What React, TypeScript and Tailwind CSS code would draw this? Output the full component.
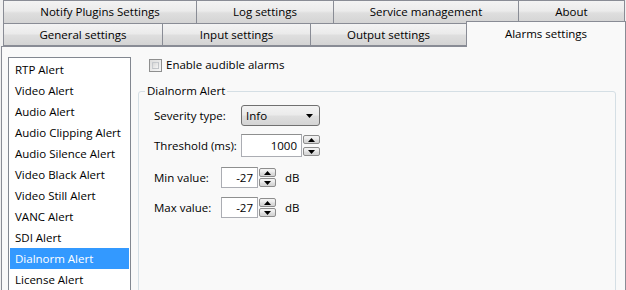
import React from "react";

const tabBg =
  "bg-[linear-gradient(to_bottom,#f3f3f3,#ebebeb_45%,#dedede_55%,#d4d4d4)]";

function Tab({ label, w, first }: { label: string; w: string; first?: boolean }) {
  return (
    <div
      className={`${w} ${first ? "" : "-ml-px"} h-full border border-[#898c95] ${tabBg} flex items-center justify-center text-black`}
    >
      {label}
    </div>
  );
}

function Arrow({ up }: { up?: boolean }) {
  return (
    <svg width="7" height="4" viewBox="0 0 7 4">
      <path d={up ? "M0 4 L3.5 0 L7 4 Z" : "M0 0 L7 0 L3.5 4 Z"} fill="#000" />
    </svg>
  );
}

function Spin({ value, w }: { value: string; w: string }) {
  return (
    <div className="flex items-stretch h-full">
      <div
        className={`${w} h-full bg-white border border-[#abadb3] border-t-[#8e8f8f] flex items-center justify-end pr-[4px] text-black`}
      >
        {value}
      </div>
      <div className="w-[18px] flex flex-col justify-between py-[1px] pl-[1px]">
        <div className={`h-[9px] rounded-[2px] border border-[#8d8d8d] ${tabBg} flex items-center justify-center`}>
          <Arrow up />
        </div>
        <div className={`h-[9px] rounded-[2px] border border-[#8d8d8d] ${tabBg} flex items-center justify-center`}>
          <Arrow />
        </div>
      </div>
    </div>
  );
}

const alerts = [
  "RTP Alert",
  "Video Alert",
  "Audio Alert",
  "Audio Clipping Alert",
  "Audio Silence Alert",
  "Video Black Alert",
  "Video Still Alert",
  "VANC Alert",
  "SDI Alert",
  "Dialnorm Alert",
  "License Alert",
];

export default function App() {
  return (
    <div className="w-[626px] h-[290px] overflow-hidden bg-[#f0f0f0] font-['Open_Sans',sans-serif] text-[11.5px] text-black">
      {/* tab rows */}
      <div className="flex h-[24px] pl-[3px]">
        <Tab label="Notify Plugins Settings" w="w-[194px]" first />
        <Tab label="Log settings" w="w-[138px]" />
        <Tab label="Service management" w="w-[186px]" />
        <Tab label="About" w="w-[107px]" />
      </div>
      <div className="flex h-[23px] pl-[3px] -mt-px">
        <Tab label="General settings" w="w-[160px]" first />
        <Tab label="Input settings" w="w-[149px]" />
        <Tab label="Output settings" w="w-[157px]" />
        <div className="relative z-10 -ml-px -mt-[2px] w-[160px] h-[26px] border border-b-0 border-[#898c95] bg-[#f9f9f9] flex items-center justify-center pb-[2px]">
          Alarms settings
        </div>
      </div>

      {/* panel */}
      <div className="ml-[1px] w-[625px] h-[250px] border border-[#898c95] bg-[#f9f9f9] flex pt-[10px] pl-[6px]">
        <div className="w-[123px] h-[240px] shrink-0 border border-[#828790] bg-white pt-[1px] px-[1px]">
          {alerts.map((a) => (
            <div
              key={a}
              className={`h-[21px] flex items-center pl-[5px] ${
                a === "Dialnorm Alert" ? "bg-[#3399ff] text-white" : ""
              }`}
            >
              {a}
            </div>
          ))}
        </div>

        <div className="ml-[7px] flex flex-col">
          <div className="flex items-center h-[14px] mt-[1px] pl-[11px] gap-[4px]">
            <div className="w-[13px] h-[13px] border border-[#8e8f8f] bg-[linear-gradient(135deg,#dcdcdc,#f6f6f6)] p-[2px]">
              <div className="w-full h-full border border-[#aeb3b9]/60 bg-[linear-gradient(135deg,#d8d8d8,#f4f4f4)]" />
            </div>
            <span>Enable audible alarms</span>
          </div>

          <div className="relative mt-[19px] w-[478px] h-[220px] border border-[#d5dfe5] rounded-[3px] pl-[15px] pt-[13px]">
            <span className="absolute left-[6px] -top-[9px] px-[2px] bg-[#f9f9f9] leading-[16px]">
              Dialnorm Alert
            </span>

            <div className="flex items-center h-[21px]">
              <span className="w-[87px]">Severity type:</span>
              <div className={`w-[79px] h-full rounded-[3px] border border-[#707070] ${tabBg} flex items-center justify-between pl-[4px] pr-[6px]`}>
                <span>Info</span>
                <Arrow />
              </div>
            </div>

            <div className="flex items-center h-[23px] mt-[8px]">
              <span className="w-[87px]">Threshold (ms):</span>
              <Spin value="1000" w="w-[61px]" />
            </div>

            <div className="flex items-center h-[21px] mt-[10px]">
              <span className="w-[67px]">Min value:</span>
              <Spin value="-27" w="w-[37px]" />
              <span className="ml-[9px]">dB</span>
            </div>

            <div className="flex items-center h-[21px] mt-[9px]">
              <span className="w-[67px]">Max value:</span>
              <Spin value="-27" w="w-[37px]" />
              <span className="ml-[9px]">dB</span>
            </div>
          </div>
        </div>
      </div>
    </div>
  );
}
